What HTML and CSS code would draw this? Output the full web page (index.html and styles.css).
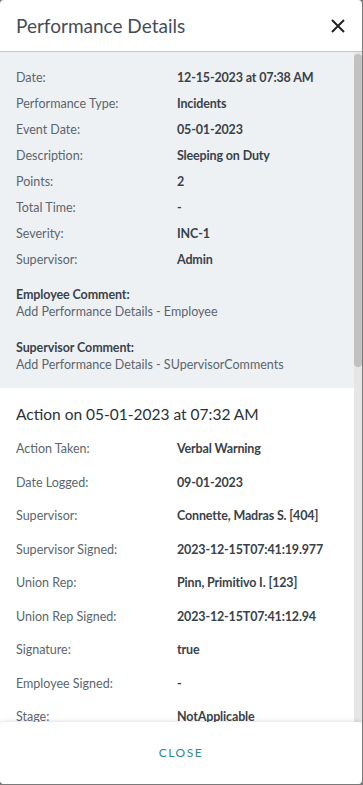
FILE: index.html
```html
<!DOCTYPE html>
<html>
<head>
<meta charset="utf-8">
<link rel="stylesheet" href="styles.css">
</head>
<body>
<div class="modal">
  <header class="modal-header">
    <h1 class="modal-title">Performance Details</h1>
    <button class="close-x" aria-label="Close">
      <svg width="14" height="14" viewBox="0 0 14 14"><path d="M1 1L13 13M13 1L1 13" stroke="#222" stroke-width="2" fill="none"/></svg>
    </button>
  </header>
  <div class="modal-body">
    <div class="scroll-content">
      <section class="summary">
        <div class="row"><span class="label">Date:</span><span class="value">12-15-2023 at 07:38 AM</span></div>
        <div class="row"><span class="label">Performance Type:</span><span class="value">Incidents</span></div>
        <div class="row"><span class="label">Event Date:</span><span class="value">05-01-2023</span></div>
        <div class="row"><span class="label">Description:</span><span class="value">Sleeping on Duty</span></div>
        <div class="row"><span class="label">Points:</span><span class="value">2</span></div>
        <div class="row"><span class="label">Total Time:</span><span class="value">-</span></div>
        <div class="row"><span class="label">Severity:</span><span class="value">INC-1</span></div>
        <div class="row"><span class="label">Supervisor:</span><span class="value">Admin</span></div>
        <div class="comment">
          <div class="comment-title">Employee Comment:</div>
          <div class="comment-text">Add Performance Details - Employee</div>
        </div>
        <div class="comment">
          <div class="comment-title">Supervisor Comment:</div>
          <div class="comment-text">Add Performance Details - SUpervisorComments</div>
        </div>
      </section>
      <section class="action">
        <h2 class="action-title">Action on 05-01-2023 at 07:32 AM</h2>
        <div class="arow"><span class="label">Action Taken:</span><span class="value">Verbal Warning</span></div>
        <div class="arow"><span class="label">Date Logged:</span><span class="value">09-01-2023</span></div>
        <div class="arow"><span class="label">Supervisor:</span><span class="value">Connette, Madras S. [404]</span></div>
        <div class="arow"><span class="label">Supervisor Signed:</span><span class="value">2023-12-15T07:41:19.977</span></div>
        <div class="arow"><span class="label">Union Rep:</span><span class="value">Pinn, Primitivo I. [123]</span></div>
        <div class="arow"><span class="label">Union Rep Signed:</span><span class="value">2023-12-15T07:41:12.94</span></div>
        <div class="arow"><span class="label">Signature:</span><span class="value">true</span></div>
        <div class="arow"><span class="label">Employee Signed:</span><span class="value">-</span></div>
        <div class="arow"><span class="label">Stage:</span><span class="value">NotApplicable</span></div>
      </section>
    </div>
    <div class="scrollbar"><div class="scrollbar-thumb"></div></div>
  </div>
  <footer class="modal-footer">
    <button class="close-btn">CLOSE</button>
  </footer>
</div>
</body>
</html>
```
FILE: styles.css
```css
* { box-sizing: border-box; }
html, body { margin: 0; padding: 0; }
body {
  background: #7a7a7a;
  width: 363px;
  height: 785px;
  font-family: Lato, "Noto Sans", sans-serif;
  overflow: hidden;
}
.modal {
  width: 362px;
  height: 784px;
  background: #fff;
  border-radius: 4px;
  display: flex;
  flex-direction: column;
  overflow: hidden;
}
.modal-header {
  height: 52px;
  flex: none;
  display: flex;
  align-items: center;
  justify-content: space-between;
  padding: 0 17px 0 16px;
  border-bottom: 1px solid #b9ced6;
}
.modal-title {
  margin: 0;
  font-size: 19px;
  font-weight: 400;
  color: #434d57;
}
.close-x {
  border: 0;
  background: none;
  padding: 0;
  width: 14px;
  height: 14px;
  display: flex;
}
.modal-body {
  flex: 1;
  min-height: 0;
  overflow: hidden;
  position: relative;
}
.scroll-content {
  width: 354px;
}
.scrollbar {
  position: absolute;
  top: 0;
  right: 0;
  width: 8px;
  height: 100%;
  background: #e6e6e6;
}
.scrollbar-thumb {
  margin-top: 2px;
  height: 313px;
  background: #c1c1c1;
  border-radius: 4px;
}
.summary {
  background: #eef1f4;
  padding: 12px 16px 15px;
}
.row {
  display: flex;
  height: 26px;
  align-items: center;
  font-size: 12.5px;
}
.label {
  width: 161px;
  flex: none;
  color: #5b656d;
}
.value {
  color: #3a4249;
  font-weight: 700;
  letter-spacing: -0.15px;
}
.comment { margin-top: 14px; font-size: 12.5px; line-height: 17px; }
.comment + .comment { margin-top: 19px; }
.comment-title { font-weight: 700; color: #3a434a; letter-spacing: -0.1px; }
.comment-text { color: #5b656d; }
.action {
  padding: 14px 16px 0;
}
.action-title {
  margin: 0;
  font-size: 15.5px;
  line-height: 24px;
  font-weight: 400;
  color: #2b3136;
  margin-bottom: 6px;
}
.arow {
  display: flex;
  height: 33.5px;
  align-items: center;
  font-size: 12.5px;
}
.modal-footer {
  height: 62px;
  flex: none;
  display: flex;
  align-items: center;
  justify-content: center;
  padding-bottom: 2px;
  border-radius: 4px;
  box-shadow: 0 -1px 4px rgba(0,0,0,0.12);
  position: relative;
  background: #fff;
}
.close-btn {
  border: 0;
  background: none;
  font-family: Lato, "Noto Sans", sans-serif;
  font-size: 12px;
  letter-spacing: 1.5px;
  color: #2e8b90;
  padding: 8px 12px;
}
```
